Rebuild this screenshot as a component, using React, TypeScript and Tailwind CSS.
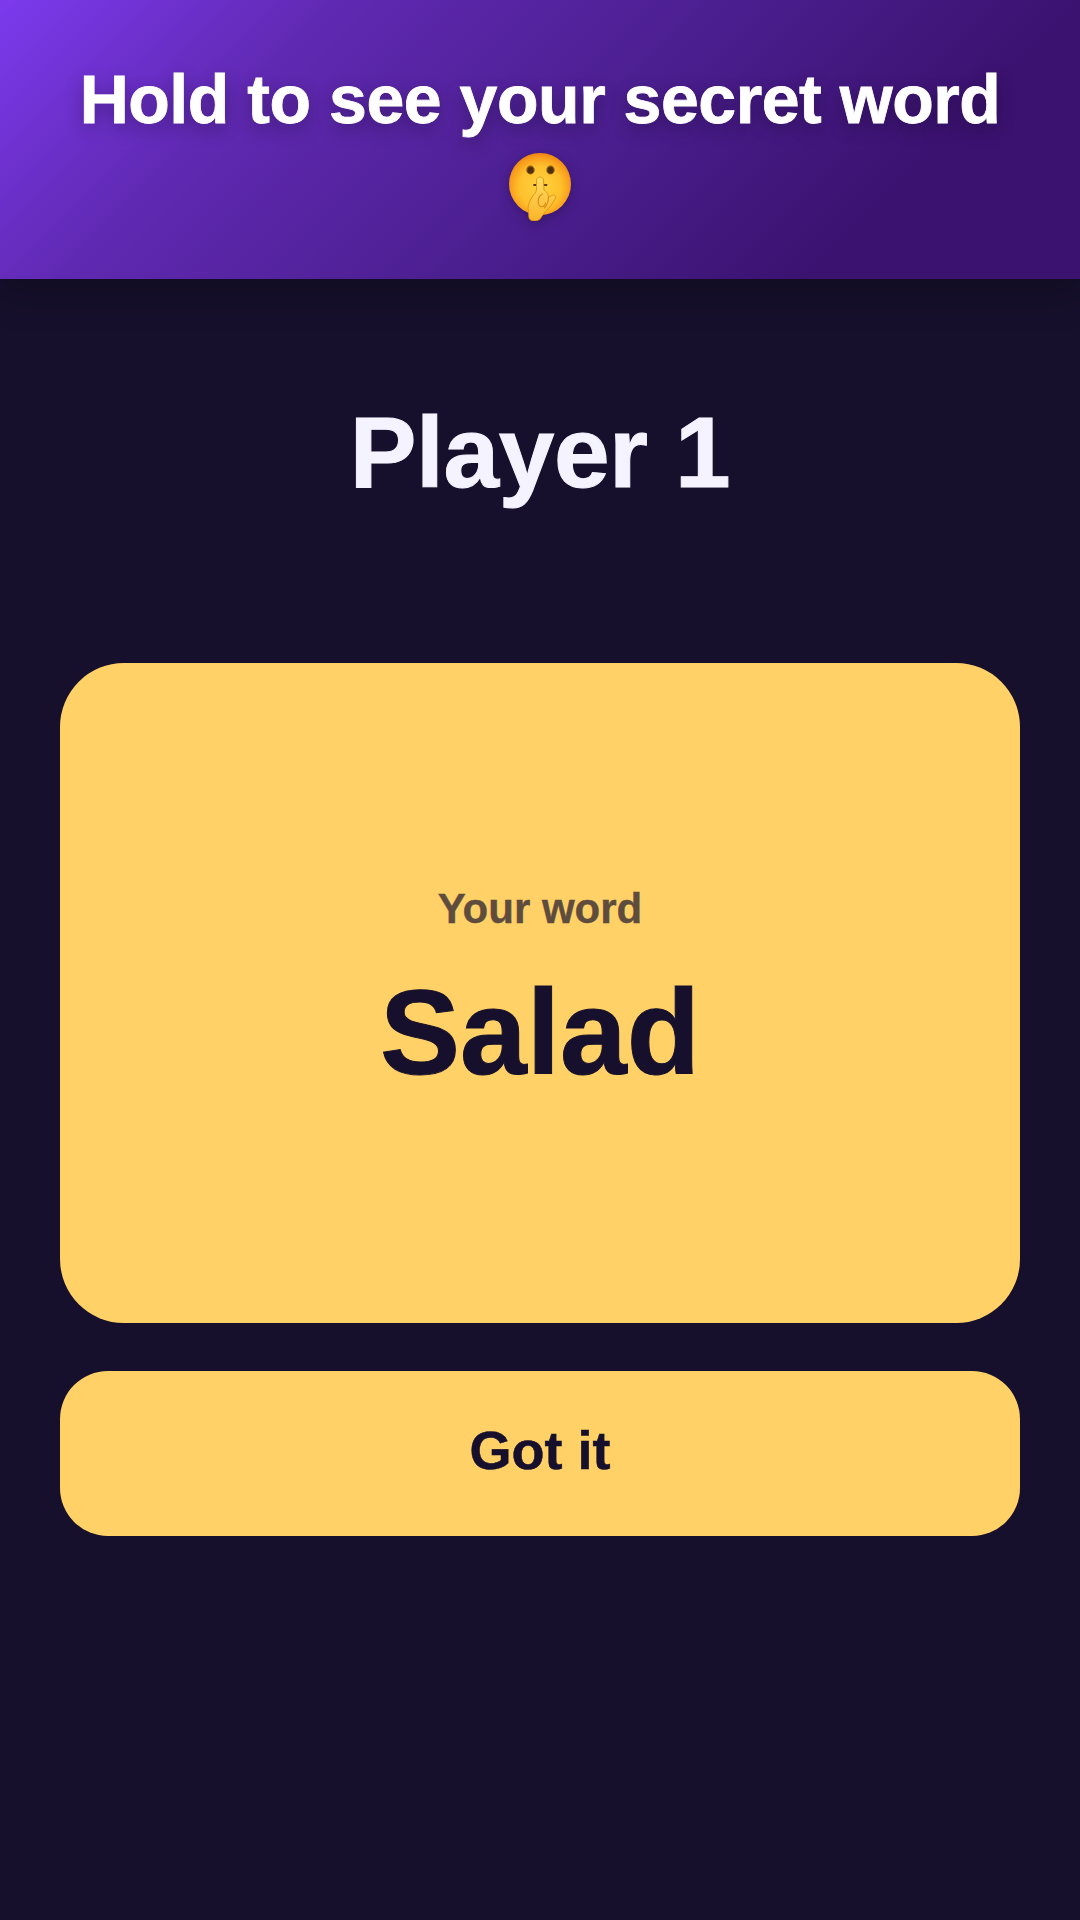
const ShushEmoji = () => (
  <svg viewBox="0 0 62 68" className="inline-block h-[68px] w-[62px] drop-shadow-[0_3px_6px_rgba(0,0,0,0.25)]">
    <defs>
      <radialGradient id="face" cx="50%" cy="55%" r="55%">
        <stop offset="0%" stopColor="#ffd23f" />
        <stop offset="62%" stopColor="#ffc02c" />
        <stop offset="88%" stopColor="#f99c1c" />
        <stop offset="100%" stopColor="#ee8410" />
      </radialGradient>
      <linearGradient id="hand" x1="0" y1="0" x2="0" y2="1">
        <stop offset="0%" stopColor="#ffdb63" />
        <stop offset="100%" stopColor="#fbb52a" />
      </linearGradient>
    </defs>
    <circle cx="31" cy="31" r="31" fill="url(#face)" />
    <ellipse cx="21.5" cy="17" rx="4.2" ry="4.4" fill="#8a5a14" />
    <ellipse cx="21.5" cy="17.3" rx="3" ry="3.3" fill="#4f300c" />
    <ellipse cx="41.5" cy="17" rx="4.2" ry="4.4" fill="#8a5a14" />
    <ellipse cx="41.5" cy="17.3" rx="3" ry="3.3" fill="#4f300c" />
    <path d="M25 32h3.500M34 32h3.500" stroke="#5e3a10" strokeWidth="1.800" strokeLinecap="round" />
    <path
      d="M27.500 27C27.500 25 29.500 24 31 24C32.500 24 34.500 25 34.500 27L35 37C38 39 39 41 39.500 44L43 42.500C45.500 41 47.500 43.500 46 46C44 50 41 54 38 57C35 60 33 63 31 66C28 68.500 22.500 68.500 20.500 66C19 63 20.500 60 19 56C19 51 21.500 46 24.500 42C26.500 40 27.500 38 27.500 36Z"
      fill="url(#hand)"
      stroke="#e0930f"
      strokeWidth="0.9"
    />
    <path d="M33.500 41C29.500 43 28 48 30 52C32 55 36 54 36.500 50M39.500 44C39.500 48 38 52 35.500 55" fill="none" stroke="#d98a12" strokeWidth="1.100" strokeLinecap="round" />
  </svg>
)

export default function App() {
  return (
    <div className="flex min-h-[1920px] flex-col items-stretch bg-[#16102c] font-['Liberation_Sans',Arial,sans-serif]">
      <header className="h-[279px] bg-[linear-gradient(135deg,#7c3aed_0%,#6029b2_25%,#4a1e8e_55%,#3b1270_80%)] px-[60px] pt-[58px] text-center shadow-[0_12px_36px_rgba(0,0,0,0.25)]">
        <h1 className="text-[68px] leading-[82px] font-bold tracking-[-0.45px] text-white [-webkit-text-stroke:0.8px_white] [text-shadow:0_6px_18px_rgba(0,0,0,0.3)]">
          Hold to see your secret word <ShushEmoji />
        </h1>
      </header>

      <main className="flex flex-col px-[60px]">
        <h2 className="mt-[116px] text-center text-[100px] leading-[114px] font-bold tracking-[-0.4px] text-[#f5f3ff] [-webkit-text-stroke:1px_#f5f3ff]">
          Player 1
        </h2>

        <section className="mt-[154px] flex h-[660px] flex-col items-center justify-center rounded-[64px] bg-[#ffd166] text-center">
          <p className="text-[42px] leading-[48px] font-bold text-[#16102c]/70 [-webkit-text-stroke:0.4px_#5a4a3c]">Your word</p>
          <p className="mt-[30px] text-[120px] leading-[138px] font-bold text-[#16102c] [-webkit-text-stroke:1px_#16102c]">Salad</p>
        </section>

        <button className="mt-[48px] h-[165px] rounded-[48px] bg-[#ffd166] pb-[7px] text-[54px] font-bold text-[#16102c] [-webkit-text-stroke:0.5px_#16102c]">
          Got it
        </button>
      </main>
    </div>
  )
}
